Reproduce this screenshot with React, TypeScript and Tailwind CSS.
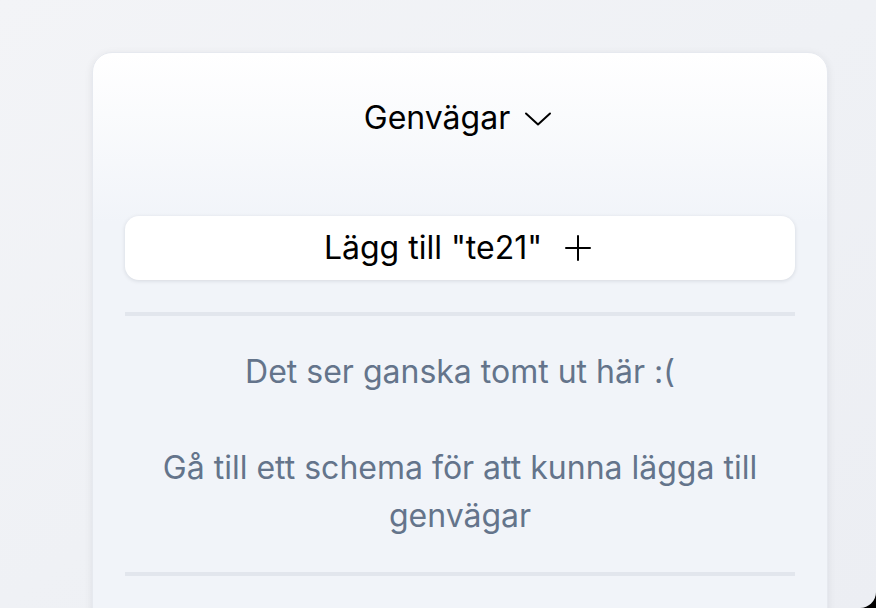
import React from "react";

function ChevronDown() {
  return (
    <svg width="28" height="16" viewBox="0 0 28 16" fill="none" stroke="currentColor" strokeWidth="2" strokeLinecap="round" strokeLinejoin="round">
      <path d="M2 2.5l12 11 12-11" />
    </svg>
  );
}

function PlusIcon() {
  return (
    <svg width="28" height="28" viewBox="0 0 28 28" fill="none" stroke="currentColor" strokeWidth="2" strokeLinecap="round">
      <path d="M14 2v24M2 14h24" />
    </svg>
  );
}

export default function App() {
  return (
    <div className="h-[608px] w-[876px] bg-black overflow-hidden" style={{ fontFamily: "Inter, 'Noto Sans', sans-serif" }}>
      <div className="h-full w-full overflow-hidden rounded-br-[16px] bg-gradient-to-br from-[#f3f4f7] via-[#eff1f5] to-[#eceef3] pl-[92px] pt-[52px]">
        <div className="w-[736px] h-[620px] rounded-[20px] border border-[#e6e9ef] bg-[linear-gradient(to_bottom,#ffffff,#f1f4f9_170px)] shadow-[0_2px_8px_rgba(15,23,42,0.08)] px-8 pt-[41px]">
          <button className="mx-auto flex items-center justify-center gap-[14px] text-[32px] leading-[48px] text-black">
            <span>Genvägar</span>
            <span className="pt-0.5 pr-1">
              <ChevronDown />
            </span>
          </button>

          <button className="mt-[74px] flex h-[64px] w-full items-center justify-center gap-[22px] rounded-[14px] bg-white text-[32px] text-black shadow-[0_1px_4px_rgba(15,23,42,0.12)]">
            <span>Lägg till "te21"</span>
            <span className="pr-1">
              <PlusIcon />
            </span>
          </button>

          <div className="mt-8 h-1 w-full bg-[#e2e6ed]" />

          <div className="mt-8 text-center text-[32px] leading-[48px] text-[#64748b]">
            <p>Det ser ganska tomt ut här :(</p>
            <p className="mt-[48px]">Gå till ett schema för att kunna lägga till genvägar</p>
          </div>

          <div className="mt-8 h-1 w-full bg-[#e2e6ed]" />
        </div>
      </div>
    </div>
  );
}
